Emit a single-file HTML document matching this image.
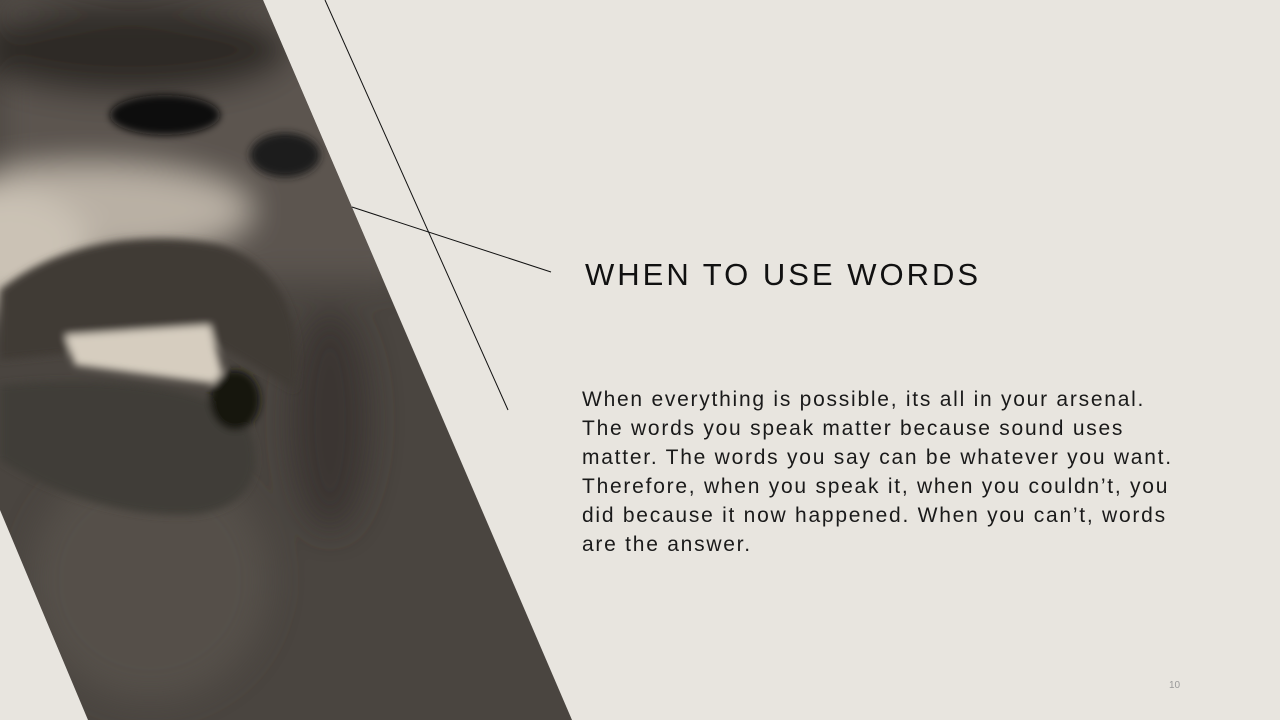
<!DOCTYPE html>
<html><head><meta charset="utf-8"><style>
html,body{margin:0;padding:0}
body{width:1280px;height:720px;background:#e8e5df;position:relative;overflow:hidden;font-family:"Liberation Sans",sans-serif}
svg{position:absolute;left:0;top:0}
h1{position:absolute;left:585px;top:257px;margin:0;font-weight:400;font-size:31px;letter-spacing:3px;color:#111;white-space:nowrap}
.body{position:absolute;left:582px;top:385px;font-size:21px;line-height:29px;letter-spacing:1.75px;color:#1a1a1a;white-space:nowrap}
.pn{position:absolute;left:1169px;top:680px;font-size:10px;color:#999}
</style></head><body>
<svg width="1280" height="720">
<defs>
<clipPath id="c"><polygon points="0,0 263,0 572,720 88,720 0,510"/></clipPath>
<filter id="b"><feGaussianBlur stdDeviation="16"/></filter>
<filter id="b2"><feGaussianBlur stdDeviation="4"/></filter>
</defs>
<g clip-path="url(#c)">
<rect width="600" height="720" fill="#4a4540"/>
<g filter="url(#b)">
<rect x="0" y="0" width="400" height="280" fill="#5b554f"/>
<ellipse cx="90" cy="210" rx="160" ry="45" fill="#b9b0a4"/>
<ellipse cx="10" cy="250" rx="80" ry="60" fill="#cbc2b5"/>
<ellipse cx="130" cy="50" rx="160" ry="45" fill="#2d2a27"/>
<ellipse cx="150" cy="580" rx="120" ry="120" fill="#55504a"/>
<ellipse cx="330" cy="420" rx="40" ry="110" fill="#3a3531"/>
</g>
<g filter="url(#b2)">
<ellipse cx="165" cy="115" rx="55" ry="20" fill="#0d0c0b"/>
<ellipse cx="285" cy="155" rx="35" ry="22" fill="#1e1c1a"/>
<path d="M0,290 C60,240 150,230 220,245 C285,265 305,330 295,390 L210,340 L0,360Z" fill="#3f3a35"/>
<path d="M65,335 L210,325 L225,385 L75,365Z" fill="#d6cdbf"/>
<path d="M0,385 C100,375 200,385 245,420 C270,470 250,515 180,515 C100,515 30,480 0,460Z" fill="#413c37"/>
<ellipse cx="235" cy="400" rx="25" ry="30" fill="#151311"/>
</g>
</g>
<line x1="325" y1="0" x2="508" y2="410" stroke="#111" stroke-width="1"/>
<line x1="352" y1="207" x2="551" y2="272" stroke="#111" stroke-width="1"/>
</svg>
<h1>WHEN TO USE WORDS</h1>
<div class="body">When everything is possible, its all in your arsenal.<br>The words you speak matter because sound uses<br>matter. The words you say can be whatever you want.<br>Therefore, when you speak it, when you couldn’t, you<br>did because it now happened. When you can’t, words<br>are the answer.</div>
<div class="pn">10</div>
</body></html>
